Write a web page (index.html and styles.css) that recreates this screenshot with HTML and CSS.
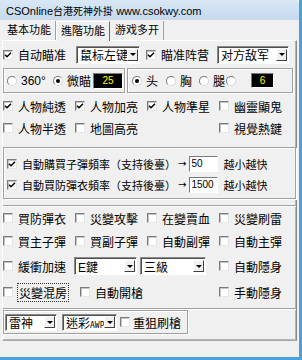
FILE: index.html
```html
<!DOCTYPE html>
<html lang="zh-Hant">
<head>
    <meta charset="UTF-8">
    <meta name="viewport" content="width=device-width, initial-scale=1.0">
    <title>CSOnline台港死神外掛</title>
    <link rel="stylesheet" href="styles.css">
</head>
<body>
    <div class="window">
        <div class="titlebar">CSOnline<span class="cjk">台港死神外掛</span> www.csokwy.com</div>

        <div class="tabs">
            <span class="tab">基本功能</span>
            <span class="tab active">進階功能</span>
            <span class="tab">游戏多开</span>
        </div>

        <div class="panel">
            <!-- aim -->
            <div class="row aim">
                <label class="chk first"><i class="box"><svg viewBox="0 0 8 8" width="8" height="8"><path d="M1 3.8 3 5.8 7 1.8" fill="none" stroke="#000" stroke-width="1.5"/></svg></i>自动瞄准</label>
                <span class="sel key"><span class="val">鼠标左键</span><span class="arr"></span></span>
                <label class="chk second"><i class="box"><svg viewBox="0 0 8 8" width="8" height="8"><path d="M1 3.8 3 5.8 7 1.8" fill="none" stroke="#000" stroke-width="1.5"/></svg></i>瞄准阵营</label>
                <span class="sel team"><span class="val">对方敌军</span><span class="arr"></span></span>
            </div>

            <div class="row pair">
                <div class="group mode">
                    <label class="opt w46"><i class="radio"></i>360°</label>
                    <label class="opt w40"><i class="radio on"></i>微瞄</label>
                    <span class="lcd wide">25</span>
                </div>
                <div class="group part">
                    <label class="opt w34"><i class="radio on"></i>头</label>
                    <label class="opt w33"><i class="radio"></i>胸</label>
                    <label class="opt w27"><i class="radio"></i>腿</label>
                    <label class="opt w25"><i class="radio"></i></label>
                    <span class="lcd">6</span>
                </div>
            </div>

            <!-- view -->
            <div class="grid view">
                <label class="chk"><i class="box"><svg viewBox="0 0 8 8" width="8" height="8"><path d="M1 3.8 3 5.8 7 1.8" fill="none" stroke="#000" stroke-width="1.5"/></svg></i>人物純透</label>
                <label class="chk"><i class="box"><svg viewBox="0 0 8 8" width="8" height="8"><path d="M1 3.8 3 5.8 7 1.8" fill="none" stroke="#000" stroke-width="1.5"/></svg></i>人物加亮</label>
                <label class="chk"><i class="box"><svg viewBox="0 0 8 8" width="8" height="8"><path d="M1 3.8 3 5.8 7 1.8" fill="none" stroke="#000" stroke-width="1.5"/></svg></i>人物準星</label>
                <label class="chk"><i class="box"></i>幽靈顯鬼</label>
                <label class="chk"><i class="box"></i>人物半透</label>
                <label class="chk"><i class="box"></i>地圖高亮</label>
                <span></span>
                <label class="chk"><i class="box"></i>視覺熱鍵</label>
            </div>

            <!-- buy frequency -->
            <div class="group freq">
                <div class="freq-row">
                    <label class="chk"><i class="box"><svg viewBox="0 0 8 8" width="8" height="8"><path d="M1 3.8 3 5.8 7 1.8" fill="none" stroke="#000" stroke-width="1.5"/></svg></i>自動購買子彈頻率（支持後臺）</label>
                    <span class="to">→</span>
                    <span class="num">50</span>
                    <span class="hint">越小越快</span>
                </div>
                <div class="freq-row">
                    <label class="chk"><i class="box"><svg viewBox="0 0 8 8" width="8" height="8"><path d="M1 3.8 3 5.8 7 1.8" fill="none" stroke="#000" stroke-width="1.5"/></svg></i>自動買防彈衣頻率（支持後臺）</label>
                    <span class="to">→</span>
                    <span class="num">1500</span>
                    <span class="hint">越小越快</span>
                </div>
            </div>

            <!-- items -->
            <div class="grid items">
                <label class="chk"><i class="box"></i>買防彈衣</label>
                <label class="chk"><i class="box"></i>災變攻擊</label>
                <label class="chk"><i class="box"></i>在變賣血</label>
                <label class="chk"><i class="box"></i>災變刷雷</label>

                <label class="chk"><i class="box"></i>買主子彈</label>
                <label class="chk"><i class="box"></i>買副子彈</label>
                <label class="chk"><i class="box"></i>自動副彈</label>
                <label class="chk"><i class="box"></i>自動主彈</label>

                <label class="chk"><i class="box"></i>緩衝加速</label>
                <div class="combo">
                    <span class="sel ekey"><span class="val">E鍵</span><span class="arr"></span></span>
                    <span class="sel level"><span class="val">三級</span><span class="arr"></span></span>
                </div>
                <label class="chk"><i class="box"></i>自動隱身</label>

                <label class="chk"><i class="box"></i><span class="focus">災變混房</span></label>
                <label class="chk shift"><i class="box"></i>自動開槍</label>
                <span></span>
                <label class="chk"><i class="box"></i>手動隱身</label>
            </div>

            <div class="frame">
                <span class="sel god"><span class="val">雷神</span><span class="arr"></span></span>
                <span class="sel awp"><span class="val">迷彩<small>AWP</small></span><span class="arr"></span></span>
                <label class="chk"><i class="box"></i>重狙刷槍</label>
            </div>
        </div>

        <div class="status"></div>
    </div>
</body>
</html>
```

FILE: styles.css
```css
* {
    box-sizing: border-box;
}

body {
    margin: 0;
    font-family: "Liberation Sans", "Noto Sans CJK TC", sans-serif;
    font-size: 12px;
    color: #000;
    background-color: #f0f0f0;
}

.window {
    width: 302px;
    height: 360px;
    display: flex;
    flex-direction: column;
    background-color: #f0f0f0;
    border-right: 3px solid #48a2d9;
    border-bottom: 3px solid #48a2d9;
}

.titlebar {
    height: 20px;
    padding-left: 6px;
    font-size: 11px;
    line-height: 22px;
    white-space: nowrap;
    overflow: hidden;
    background: linear-gradient(#d8e7f5, #c6d9ee);
    border-top-right-radius: 5px;
}

.titlebar .cjk {
    font-size: 10px;
}

/* tabs */
.tabs {
    height: 20px;
    display: flex;
    align-items: flex-end;
    padding-left: 2px;
}

.tab {
    height: 19px;
    padding: 0 4px 0 5px;
    font-size: 11px;
    line-height: 18px;
    white-space: nowrap;
    border-right: 1px solid #a0a0a0;
}

.tab.active {
    position: relative;
    z-index: 1;
    height: 20px;
    margin-bottom: -1px;
    padding-left: 4px;
    background-color: #f0f0f0;
    border-top: 1px solid #fff;
    border-left: 1px solid #fff;
    border-right-color: #696969;
}

.panel {
    width: 295px;
    height: 301px;
    margin-left: 2px;
    padding-top: 4px;
    border-top: 1px solid #fff;
    border-left: 1px solid #fff;
    border-right: 1px solid #8a8a8a;
    border-bottom: 1px solid #a8a8a8;
    box-shadow: inset -1px -1px #b4b4b4;
}

.status {
    flex: 1;
}

/* controls */
.row {
    display: flex;
    align-items: center;
}

.chk {
    display: flex;
    align-items: center;
    gap: 5px;
    white-space: nowrap;
}

.box {
    width: 10px;
    height: 10px;
    flex: none;
    display: flex;
    align-items: center;
    justify-content: center;
    background-color: #fff;
    border: 1px solid;
    border-color: #7a7a7a #e6e6e6 #e6e6e6 #7a7a7a;
    box-shadow: inset 1px 1px #c4c4c4;
}

.opt {
    display: flex;
    align-items: center;
    gap: 4px;
    white-space: nowrap;
}

.radio {
    width: 10px;
    height: 10px;
    flex: none;
    display: flex;
    align-items: center;
    justify-content: center;
    border-radius: 50%;
    background-color: #fff;
    border: 1px solid;
    border-color: #7a7a7a #d8d8d8 #d8d8d8 #7a7a7a;
}

.radio.on::after {
    content: "";
    width: 4px;
    height: 4px;
    border-radius: 50%;
    background-color: #000;
}

.sel {
    height: 18px;
    display: flex;
    align-items: center;
    padding: 0 1px 0 3px;
    background-color: #fff;
    border: 1px solid;
    border-color: #8a8a8a #fff #fff #8a8a8a;
    box-shadow: inset 1px 1px #505050;
    white-space: nowrap;
}

.sel .val {
    flex: 1;
    overflow: hidden;
}

.sel small {
    font-family: "DejaVu Sans Mono", monospace;
    font-size: 8px;
}

.arr {
    width: 11px;
    height: 12px;
    flex: none;
    display: flex;
    align-items: center;
    justify-content: center;
    background-color: #f0f0f0;
    border: 1px solid;
    border-color: #fff #404040 #404040 #fff;
}

.arr::before {
    content: "";
    border-left: 3px solid transparent;
    border-right: 3px solid transparent;
    border-top: 3px solid #000;
}

.lcd {
    width: 23px;
    height: 15px;
    display: flex;
    align-items: center;
    justify-content: center;
    font-size: 10px;
    color: #ff0;
    background-color: #000;
    border: 1px solid;
    border-color: #7a7a7a #fff #fff #7a7a7a;
}

.lcd.wide {
    width: 30px;
    height: 16px;
}

.group {
    border: 1px solid #a0a0a0;
    box-shadow: inset 1px 1px #fff, 1px 1px #fff;
}

/* aim row */
.aim {
    height: 19px;
}

.first {
    width: 73px;
}

.second {
    width: 71px;
}

.key {
    width: 64px;
    margin-right: 6px;
}

.team {
    width: 72px;
}

/* radio groups */
.pair {
    height: 25px;
    margin-top: 4px;
    gap: 2px;
}

.mode,
.part {
    height: 25px;
    display: flex;
    align-items: center;
}

.mode {
    width: 122px;
    padding-left: 3px;
}

.part {
    width: 166px;
    padding-left: 4px;
}

.w46 { width: 46px; }
.w40 { width: 40px; }
.w34 { width: 34px; }
.w33 { width: 33px; }
.w27 { width: 27px; }
.w25 { width: 25px; }

/* check grids */
.grid {
    display: grid;
    grid-template-columns: 72px 72px 72px 72px;
    align-items: center;
}

.view {
    grid-template-rows: 22px 22px;
    margin-top: 2px;
}

.freq {
    height: 52px;
    margin-top: 8px;
    padding: 5px 0 0 3px;
}

.freq-row {
    height: 21px;
    display: flex;
    align-items: center;
    font-size: 11px;
}

.to {
    margin-left: 2px;
    font-family: "DejaVu Sans", sans-serif;
    font-size: 10px;
}

.num {
    width: 29px;
    height: 16px;
    margin-left: 3px;
    padding-left: 1px;
    font-size: 10px;
    line-height: 14px;
    background-color: #fff;
    border: 1px solid;
    border-color: #7a7a7a #fff #fff #7a7a7a;
}

.hint {
    margin-left: 5px;
}

.items {
    height: 104px;
    margin-top: 6px;
    padding-top: 1px;
    grid-template-rows: 22px 24px 26px 26px;
    align-content: start;
    border-top: 1px solid #a0a0a0;
    border-bottom: 1px solid #a0a0a0;
    box-shadow: inset 0 1px #fff, 0 1px #fff;
}

.combo {
    grid-column: 2 / 4;
    display: flex;
    gap: 3px;
    margin-left: -1px;
}

.ekey {
    width: 63px;
}

.level {
    width: 66px;
}

.focus {
    padding: 0 1px;
    outline: 1px dotted #333;
}

.shift {
    margin-left: 5px;
}

/* bottom frame */
.frame {
    width: 185px;
    height: 24px;
    margin-top: 1px;
    display: flex;
    align-items: center;
    padding-left: 1px;
    border: 1px solid #a0a0a0;
    box-shadow: inset 1px 1px #fff, 1px 1px #fff;
}

.god {
    width: 52px;
    height: 17px;
}

.awp {
    width: 55px;
    height: 17px;
    margin-left: 5px;
    margin-right: 3px;
}

.frame .chk {
    gap: 3px;
}
```
